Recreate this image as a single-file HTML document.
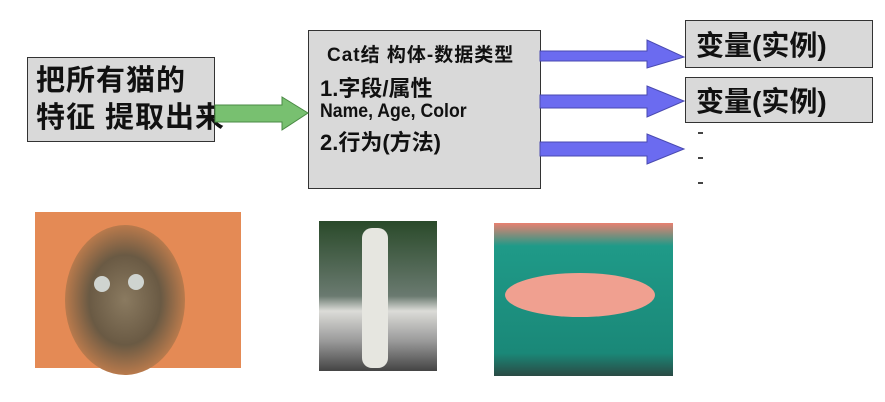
<!DOCTYPE html>
<html><head><meta charset="utf-8"><style>
body{margin:0;width:885px;height:402px;background:#fff;position:relative;overflow:hidden;font-family:"Liberation Sans","Noto Sans CJK SC",sans-serif;font-weight:bold;color:#111}
.box{position:absolute;background:#d9d9d9;border:1.5px solid #333;box-sizing:border-box}
.t{position:absolute;white-space:nowrap;transform-origin:0 0}
svg{position:absolute;left:0;top:0}
</style></head><body>
<div class="box" style="left:27px;top:57px;width:188px;height:85px"></div>
<div class="t" style="left:36px;top:63px;font-size:29px;line-height:37px;letter-spacing:1px">把所有猫的<br>特征 提取出来</div>
<div class="box" style="left:308px;top:30px;width:233px;height:159px"></div>
<div class="t" style="left:327px;top:40px;font-size:19px;letter-spacing:1px">Cat结 构体-数据类型</div>
<div class="t" style="left:320px;top:71px;font-size:22px">1.字段/属性</div>
<div class="t" style="left:320px;top:101px;font-size:19px;transform:scaleX(.93)">Name, Age, Color</div>
<div class="t" style="left:320px;top:125px;font-size:22px">2.行为(方法)</div>
<div class="box" style="left:685px;top:20px;width:188px;height:48px"></div>
<div class="t" style="left:696px;top:24px;font-size:28px">变量(实例)</div>
<div class="box" style="left:685px;top:77px;width:188px;height:46px"></div>
<div class="t" style="left:696px;top:80px;font-size:28px">变量(实例)</div>
<svg width="885" height="402">
<g fill="#6b6bf0" stroke="#4a4ab0" stroke-width="1">
<polygon points="540,51 647,51 647,40 684,57 647,68 647,61 540,61"/>
<polygon points="540,95 647,95 647,86 684,101 647,117 647,108 540,108"/>
<polygon points="540,142 647,142 647,134 684,149 647,164 647,156 540,156"/>
</g>
<polygon points="215,105 282,105 282,97 308,113 282,130 282,122 215,122" fill="#78c070" stroke="#4a8a44"/>
<g fill="#444"><rect x="698" y="132" width="5" height="2"/><rect x="698" y="157" width="5" height="2"/><rect x="698" y="182" width="5" height="2"/></g>
<defs>
<radialGradient id="cat" cx="50%" cy="50%" r="60%"><stop offset="0" stop-color="#8a7a60"/><stop offset=".5" stop-color="#6a5a44"/><stop offset="1" stop-color="#e08a50"/></radialGradient>
<linearGradient id="fish" x1="0" y1="0" x2="0" y2="1"><stop offset="0" stop-color="#e88070"/><stop offset=".15" stop-color="#1f9a88"/><stop offset=".85" stop-color="#1a8878"/><stop offset="1" stop-color="#2a4a44"/></linearGradient>
<linearGradient id="rob" x1="0" y1="0" x2="0" y2="1"><stop offset="0" stop-color="#2a4a2a"/><stop offset=".5" stop-color="#6a7a70"/><stop offset=".6" stop-color="#dcdcd8"/><stop offset=".8" stop-color="#9a9a9a"/><stop offset="1" stop-color="#444"/></linearGradient>
</defs>
<rect x="35" y="212" width="206" height="156" fill="#e48a55"/>
<ellipse cx="125" cy="300" rx="60" ry="75" fill="url(#cat)"/>
<circle cx="102" cy="284" r="8" fill="#cfd4d0"/><circle cx="136" cy="282" r="8" fill="#cfd4d0"/>
<rect x="319" y="221" width="118" height="150" fill="url(#rob)"/>
<rect x="362" y="228" width="26" height="140" rx="10" fill="#e6e6e0"/>
<rect x="494" y="223" width="179" height="153" fill="url(#fish)"/>
<ellipse cx="580" cy="295" rx="75" ry="22" fill="#f0a090"/>
</svg>
</body></html>
